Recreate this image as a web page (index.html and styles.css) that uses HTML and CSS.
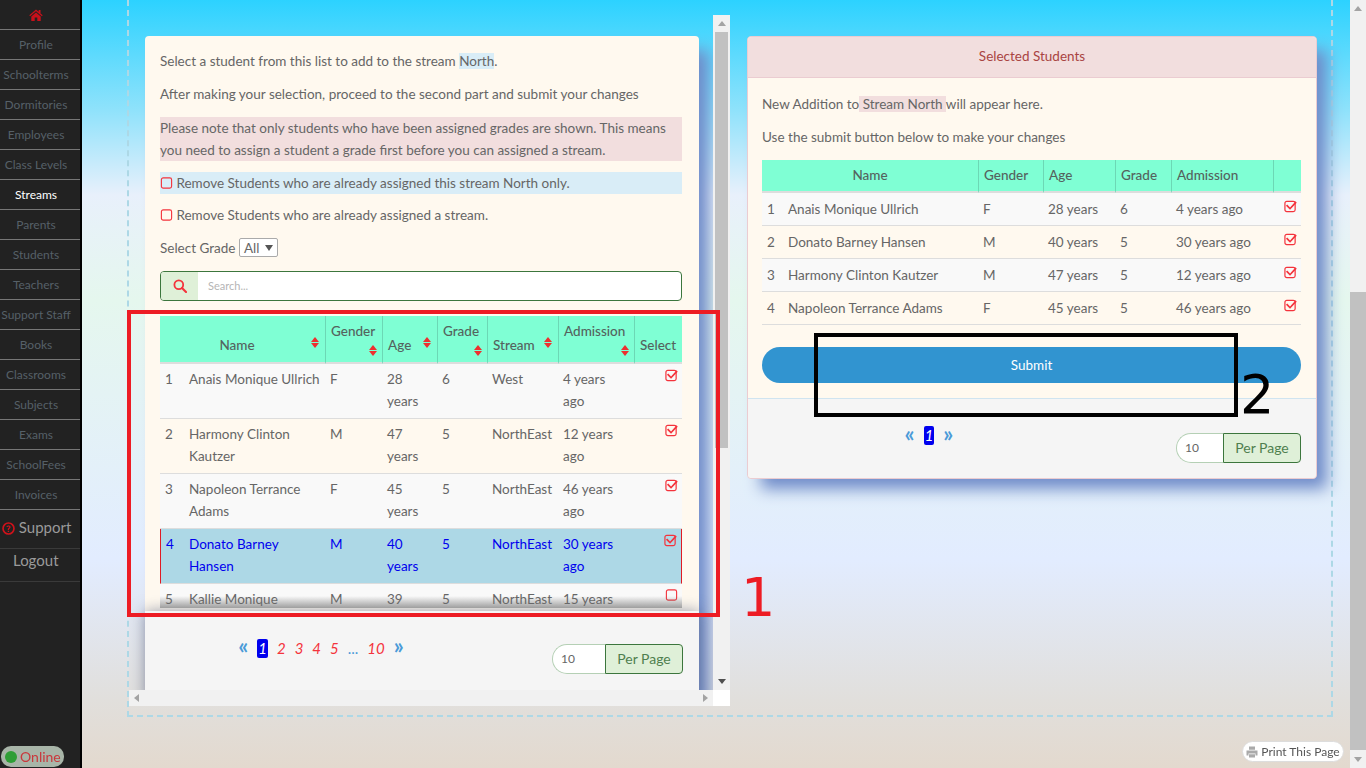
FILE: index.html
```html
<!DOCTYPE html>
<html lang="en">
<head>
    <meta charset="UTF-8">
    <meta name="viewport" content="width=device-width, initial-scale=1.0">
    <title>Streams</title>
    <link rel="stylesheet" href="styles.css">
</head>
<body>

    <svg class="icon-defs" aria-hidden="true">
        <symbol id="ico-checked" viewBox="0 0 14 14">
            <rect x="1" y="2" width="11" height="11" rx="2" fill="none" stroke="#f4333c" stroke-width="1.3"/>
            <path d="M3.5 5.5l3 3 6-6.5 1.2 1.6-7.2 7.4-4.4-4.2z" fill="#f4333c"/>
        </symbol>
        <symbol id="ico-empty" viewBox="0 0 14 14">
            <rect x="1.5" y="1.5" width="11" height="11" rx="2" fill="none" stroke="#f4333c" stroke-width="1.2"/>
        </symbol>
    </svg>

    <nav class="sidebar">
        <a class="nav-item nav-home">
            <svg width="14" height="12" viewBox="0 0 14 12"><path d="M7 0.5L0.3 6.3l.8.9L7 2.2l5.9 5 .8-.9-2.2-1.9V1h-1.8v1.8zM2.3 7.6V12h3.4V8.5h2.6V12h3.4V7.6L7 3.6z" fill="#c8101a"/></svg>
        </a>
        <a class="nav-item">Profile</a>
        <a class="nav-item">Schoolterms</a>
        <a class="nav-item">Dormitories</a>
        <a class="nav-item">Employees</a>
        <a class="nav-item">Class Levels</a>
        <a class="nav-item active">Streams</a>
        <a class="nav-item">Parents</a>
        <a class="nav-item">Students</a>
        <a class="nav-item">Teachers</a>
        <a class="nav-item">Support Staff</a>
        <a class="nav-item">Books</a>
        <a class="nav-item">Classrooms</a>
        <a class="nav-item">Subjects</a>
        <a class="nav-item">Exams</a>
        <a class="nav-item">SchoolFees</a>
        <a class="nav-item">Invoices</a>
        <a class="nav-big nav-support">
            <svg width="13" height="13" viewBox="0 0 14 14"><circle cx="7" cy="7" r="5.9" fill="none" stroke="#d0121b" stroke-width="1.8"/><path d="M4.8 5.4C5 3.2 9.3 3.2 9.3 5.5c0 1.6-1.8 1.5-1.8 3H6.2c0-2.2 1.7-2 1.7-3 0-.9-1.6-.9-1.8 0zM6.2 9.3h1.4v1.4H6.2z" fill="#d0121b"/></svg>
            Support
        </a>
        <a class="nav-big nav-logout">Logout</a>
    </nav>

    <main class="content">
        <div class="frame">

            <section class="scroller">
                <div class="scroll-view">
                    <div class="card card-pick">
                        <div class="card-body">
                            <p>Select a student from this list to add to the stream <span class="mark-blue">North</span>.</p>
                            <p>After making your selection, proceed to the second part and submit your changes</p>
                            <p class="note-red">Please note that only students who have been assigned grades are shown. This means you need to assign a student a grade first before you can assigned a stream.</p>
                            <p class="note-blue"><svg class="box"><use href="#ico-empty"/></svg> Remove Students who are already assigned this stream North only.</p>
                            <p><svg class="box"><use href="#ico-empty"/></svg> Remove Students who are already assigned a stream.</p>
                            <p>Select Grade <span class="fake-select">All <i class="caret"></i></span></p>

                            <div class="search">
                                <span class="search-addon">
                                    <svg width="14" height="14" viewBox="0 0 14 14"><circle cx="5.8" cy="5.8" r="4.4" fill="none" stroke="#f4333c" stroke-width="1.8"/><path d="M9 9l4 4" stroke="#f4333c" stroke-width="2.2" stroke-linecap="round"/></svg>
                                </span>
                                <span class="search-input">Search...</span>
                            </div>

                            <div class="table-clip">
                                <table class="grid grid-pick">
                                    <colgroup>
                                        <col class="w-24"><col class="w-141"><col class="w-57"><col class="w-55"><col class="w-50"><col class="w-71"><col class="w-76"><col class="w-48">
                                    </colgroup>
                                    <thead>
                                        <tr>
                                            <th class="center" colspan="2"><i class="sort"></i>Name</th>
                                            <th class="stack">Gender<i class="sort"></i></th>
                                            <th><i class="sort"></i>Age</th>
                                            <th class="stack">Grade<i class="sort"></i></th>
                                            <th><i class="sort"></i>Stream</th>
                                            <th class="stack">Admission<i class="sort"></i></th>
                                            <th>Select</th>
                                        </tr>
                                    </thead>
                                    <tbody>
                                        <tr>
                                            <td>1</td><td>Anais Monique Ullrich</td><td>F</td><td>28 years</td><td>6</td><td>West</td><td>4 years ago</td>
                                            <td class="tick"><svg class="box"><use href="#ico-checked"/></svg></td>
                                        </tr>
                                        <tr>
                                            <td>2</td><td>Harmony Clinton Kautzer</td><td>M</td><td>47 years</td><td>5</td><td>NorthEast</td><td>12 years ago</td>
                                            <td class="tick"><svg class="box"><use href="#ico-checked"/></svg></td>
                                        </tr>
                                        <tr>
                                            <td>3</td><td>Napoleon Terrance Adams</td><td>F</td><td>45 years</td><td>5</td><td>NorthEast</td><td>46 years ago</td>
                                            <td class="tick"><svg class="box"><use href="#ico-checked"/></svg></td>
                                        </tr>
                                        <tr class="picked">
                                            <td>4</td><td>Donato Barney Hansen</td><td>M</td><td>40 years</td><td>5</td><td>NorthEast</td><td>30 years ago</td>
                                            <td class="tick"><svg class="box"><use href="#ico-checked"/></svg></td>
                                        </tr>
                                        <tr>
                                            <td>5</td><td>Kallie Monique Stokes</td><td>M</td><td>39 years</td><td>5</td><td>NorthEast</td><td>15 years ago</td>
                                            <td class="tick"><svg class="box"><use href="#ico-empty"/></svg></td>
                                        </tr>
                                    </tbody>
                                </table>
                            </div>
                        </div>

                        <div class="card-foot foot-pick">
                            <div class="pager">
                                <span class="chev">«</span>
                                <span class="page current">1</span>
                                <span class="page">2</span>
                                <span class="page">3</span>
                                <span class="page">4</span>
                                <span class="page">5</span>
                                <span class="dots">...</span>
                                <span class="page">10</span>
                                <span class="chev">»</span>
                            </div>
                            <div class="per-page">
                                <span class="per-input">10</span>
                                <span class="per-label">Per Page</span>
                            </div>
                        </div>
                    </div>
                </div>

                <div class="vbar">
                    <i class="arrow arrow-up"></i>
                    <div class="vbar-thumb"></div>
                    <i class="arrow arrow-down"></i>
                </div>
                <div class="hbar">
                    <i class="arrow arrow-left"></i>
                    <i class="arrow arrow-right"></i>
                </div>
                <div class="corner"></div>
            </section>

            <section class="card card-selected">
                <div class="card-head">Selected Students</div>
                <div class="card-body">
                    <p>New Addition to<span class="mark-red"> Stream North </span>will appear here.</p>
                    <p>Use the submit button below to make your changes</p>

                    <table class="grid grid-selected">
                        <colgroup>
                            <col class="w-21"><col class="w-195"><col class="w-65"><col class="w-72"><col class="w-56"><col class="w-102"><col class="w-28">
                        </colgroup>
                        <thead>
                            <tr>
                                <th class="center" colspan="2">Name</th>
                                <th>Gender</th>
                                <th>Age</th>
                                <th>Grade</th>
                                <th>Admission</th>
                                <th></th>
                            </tr>
                        </thead>
                        <tbody>
                            <tr>
                                <td>1</td><td>Anais Monique Ullrich</td><td>F</td><td>28 years</td><td>6</td><td>4 years ago</td>
                                <td class="tick"><svg class="box"><use href="#ico-checked"/></svg></td>
                            </tr>
                            <tr>
                                <td>2</td><td>Donato Barney Hansen</td><td>M</td><td>40 years</td><td>5</td><td>30 years ago</td>
                                <td class="tick"><svg class="box"><use href="#ico-checked"/></svg></td>
                            </tr>
                            <tr>
                                <td>3</td><td>Harmony Clinton Kautzer</td><td>M</td><td>47 years</td><td>5</td><td>12 years ago</td>
                                <td class="tick"><svg class="box"><use href="#ico-checked"/></svg></td>
                            </tr>
                            <tr>
                                <td>4</td><td>Napoleon Terrance Adams</td><td>F</td><td>45 years</td><td>5</td><td>46 years ago</td>
                                <td class="tick"><svg class="box"><use href="#ico-checked"/></svg></td>
                            </tr>
                        </tbody>
                    </table>

                    <button class="submit" type="button">Submit</button>
                </div>
                <div class="card-foot foot-selected">
                    <div class="pager">
                        <span class="chev">«</span>
                        <span class="page current">1</span>
                        <span class="chev">»</span>
                    </div>
                    <div class="per-page">
                        <span class="per-input">10</span>
                        <span class="per-label">Per Page</span>
                    </div>
                </div>
            </section>

        </div>
    </main>

    <div class="pagebar">
        <i class="arrow arrow-up"></i>
        <div class="pagebar-thumb"></div>
        <i class="arrow arrow-down"></i>
    </div>

    <!-- things lying on top of the page -->
    <div class="online"><i class="dot"></i>Online</div>
    <div class="print">
        <svg width="12" height="12" viewBox="0 0 12 12"><path d="M3 0.5h6v3.2H3zM0.5 4.5h11v5H9.5V7.5h-7v2H0.5zM3 8.3h6v3.2H3z" fill="#aaa"/></svg>
        Print This Page
    </div>
    <div class="callout callout-red"></div>
    <div class="callout-num num-red">1</div>
    <div class="callout callout-black"></div>
    <div class="callout-num num-black">2</div>

</body>
</html>
```

FILE: styles.css
```css
* {
    box-sizing: border-box;
}

html, body {
    height: 768px;
    overflow: hidden;
}

body {
    margin: 0;
    display: flex;
    font-family: Lato, "Open Sans", sans-serif;
    font-size: 13.5px;
    line-height: 22px;
    color: #666;
    background: linear-gradient(to bottom, #2cd2ff 0, #8fe2fb 110px, #e8f0fb 195px, #e5f7ee 300px, #e2ecff 560px, #e1dfdc 700px, #e3d9ce 768px);
}

.icon-defs {
    position: absolute;
    width: 0;
    height: 0;
}

/* sidebar */
.sidebar {
    flex: 0 0 82px;
    height: 768px;
    background-color: #222;
    border-right: 2px solid #000;
}

.nav-item {
    display: flex;
    align-items: center;
    justify-content: center;
    height: 30px;
    padding-right: 8px;
    border-bottom: 1px solid #777;
    font-size: 12px;
    color: #566068;
    white-space: nowrap;
}

.nav-item.active {
    color: #fff;
}

.nav-big {
    display: block;
    font-size: 15px;
    color: #9a9a9a;
    border-bottom: 1px solid #3a3a3a;
    white-space: nowrap;
}

.nav-support {
    height: 39px;
    padding: 6px 0 0 2px;
}

.nav-support svg {
    vertical-align: -2px;
}

.nav-logout {
    height: 33px;
    padding: 0 0 0 13px;
}

/* main area */
.content {
    flex: 1;
    padding-left: 45px;
}

.frame {
    display: flex;
    align-items: flex-start;
    gap: 17px;
    width: 1206px;
    height: 717px;
    padding-top: 15px;
    border: 2px dashed #add8e6;
    border-top: none;
}

.scroller {
    display: grid;
    grid-template-columns: 584px 17px;
    grid-template-rows: 675px 16px;
    flex: 0 0 601px;
}

.scroll-view {
    overflow: hidden;
    padding: 21px 0 0 16px;
}

.card {
    background-color: #fff9ef;
    border-radius: 4px;
    box-shadow: 12px 12px 16px -2px #6f8bc9;
}

.card-pick {
    width: 554px;
    height: 700px;
}

.card-selected {
    flex: 0 0 570px;
    margin-top: 21px;
    border: 1px solid #ebccd1;
}

.card-head {
    height: 41px;
    line-height: 38px;
    text-align: center;
    color: #a94442;
    background-color: #f2dede;
    border-bottom: 1px solid #ebccd1;
    border-radius: 4px 4px 0 0;
}

.card-body {
    padding: 14px 17px 0 15px;
}

.card-selected .card-body {
    padding: 15px 15px 15px 14px;
}

.card-body p {
    margin: 0 0 11px;
}

.mark-blue {
    background-color: #d9edf7;
}

.mark-red {
    background-color: #f2dede;
}

.card-body .note-red {
    margin-top: 12px;
    background-color: #f2dede;
}

.card-body .note-blue {
    margin-bottom: 10px;
    background-color: #d9edf7;
}

.box {
    width: 13px;
    height: 14px;
    vertical-align: -2px;
}

.fake-select {
    display: inline-block;
    height: 19px;
    padding: 0 4px;
    line-height: 18px;
    border: 1px solid #aaa;
    border-radius: 2px;
    background-color: #fff;
}

.caret {
    display: inline-block;
    margin-left: 2px;
    vertical-align: 2px;
    border-left: 4px solid transparent;
    border-right: 4px solid transparent;
    border-top: 6px solid #555;
}

.search {
    display: flex;
    height: 30px;
    margin: 12px 0 15px;
    border: 1px solid #3c763d;
    border-radius: 4px;
    background-color: #fff;
    overflow: hidden;
}

.search-addon {
    display: flex;
    align-items: center;
    justify-content: center;
    width: 37px;
    background-color: #dff0d8;
}

.search-input {
    padding-left: 10px;
    font-size: 11px;
    line-height: 28px;
    color: #b5b5b5;
}

/* tables */
.grid {
    width: 100%;
    table-layout: fixed;
    border-collapse: separate;
    border-spacing: 0;
}

.w-21 { width: 21px; }
.w-24 { width: 24px; }
.w-28 { width: 28px; }
.w-48 { width: 48px; }
.w-50 { width: 50px; }
.w-55 { width: 55px; }
.w-56 { width: 56px; }
.w-57 { width: 57px; }
.w-65 { width: 65px; }
.w-71 { width: 71px; }
.w-72 { width: 72px; }
.w-76 { width: 76px; }
.w-102 { width: 102px; }
.w-141 { width: 141px; }
.w-195 { width: 195px; }

.grid th {
    padding: 4px 5px;
    font-weight: 500;
    color: #54635e;
    text-align: left;
    background-color: #7fffd4;
    border-left: 1px solid #6cd8b5;
    border-bottom: 2px solid #ddd;
}

.grid th:first-child {
    border-left: none;
}

.grid th.center {
    text-align: center;
}

.grid td {
    padding: 4px 5px 6px;
    vertical-align: top;
    border-bottom: 1px solid #ddd;
}

.grid tbody tr:nth-child(odd) {
    background-color: #f9f9f9;
}

.grid td.tick {
    padding: 0 4px 0 0;
    text-align: right;
}

.grid-pick th {
    height: 47px;
    padding-bottom: 6px;
    vertical-align: bottom;
}

.grid-pick th.stack {
    padding-top: 4px;
    vertical-align: top;
}

.sort {
    position: relative;
    float: right;
    width: 9px;
    height: 11px;
    margin: 3px 0 0 2px;
}

.sort::before,
.sort::after {
    content: "";
    position: absolute;
    left: 0;
    border-left: 4.5px solid transparent;
    border-right: 4.5px solid transparent;
}

.sort::before {
    top: 0;
    border-bottom: 5px solid #ee2f2f;
}

.sort::after {
    bottom: 0;
    border-top: 5px solid #ee2f2f;
}

.stack .sort {
    margin-right: -1px;
}

.grid tbody .picked {
    background-color: #add8e6;
    color: #0000ee;
}

.picked td:first-child {
    border-left: 1px solid #e01b24;
}

.picked td:last-child {
    border-right: 1px solid #e01b24;
}

.table-clip {
    position: relative;
    height: 292px;
    overflow: hidden;
}

.table-clip::after {
    content: "";
    position: absolute;
    left: 0;
    right: 0;
    bottom: 0;
    height: 12px;
    background: linear-gradient(to bottom, rgba(120, 120, 120, 0), rgba(110, 110, 110, 0.65));
}

.grid-selected {
    margin-top: 12px;
}

.grid-selected th {
    height: 33px;
    padding: 0 5px 2px;
}

.grid-selected td {
    height: 33px;
    padding: 5px;
}

.grid-selected td.tick {
    padding-top: 2px;
}

.submit {
    display: block;
    width: 100%;
    height: 36px;
    margin-top: 22px;
    padding-bottom: 2px;
    border: none;
    border-radius: 18px;
    font: inherit;
    color: #fff;
    background-color: #3194d0;
}

/* panel footers */
.card-foot {
    display: flex;
    align-items: flex-start;
    padding: 0 15px;
    background-color: #f5f5f5;
}

.foot-pick {
    height: 91px;
    margin-top: 3px;
    box-shadow: 0 0 14px rgba(80, 90, 120, 0.6);
}

.foot-selected {
    height: 80px;
    border-top: 1px solid #d0e4f0;
    border-radius: 0 0 4px 4px;
}

.pager {
    display: flex;
    align-items: center;
    justify-content: center;
    gap: 9px;
    width: 322px;
    margin-top: 26px;
    font-size: 15px;
    font-style: italic;
    color: #f4333c;
}

.foot-selected .pager {
    width: 332px;
    margin-top: 27px;
}

.chev {
    font-size: 22px;
    font-style: normal;
    font-weight: 700;
    line-height: 18px;
    color: #4a9ad8;
    margin-top: -4px;
}

.current {
    padding: 0 1px;
    line-height: 19px;
    color: #fff;
    background-color: #0000ee;
    border-radius: 2px;
}

.dots {
    color: #4a9ad8;
    font-style: normal;
}

.per-page {
    display: flex;
    margin-left: auto;
    width: 125px;
    height: 30px;
    margin-top: 34px;
    font-size: 14px;
    line-height: 28px;
}

.foot-pick .per-page {
    width: 131px;
    margin-top: 33px;
    margin-right: 1px;
}

.per-input {
    flex: 1;
    padding-left: 8px;
    font-size: 12px;
    background-color: #fff;
    border: 1px solid #b5d0b5;
    border-right: none;
    border-radius: 15px 0 0 15px;
}

.per-label {
    width: 78px;
    text-align: center;
    color: #4f7f4f;
    background-color: #dff0d8;
    border: 1px solid #3c763d;
    border-radius: 0 4px 4px 0;
}

/* scrollbars, drawn by hand */
.vbar {
    display: flex;
    flex-direction: column;
    align-items: center;
    background-color: #f1f1f1;
    padding-top: 17px;
    position: relative;
}

.vbar-thumb {
    width: 13px;
    height: 416px;
    background-color: #c1c1c1;
}

.vbar .arrow-up {
    position: absolute;
    top: 6px;
}

.vbar .arrow-down {
    position: absolute;
    bottom: 6px;
}

.hbar {
    display: flex;
    align-items: center;
    justify-content: space-between;
    padding: 0 5px;
    background-color: #f1f1f1;
}

.corner {
    background-color: #fff;
}

.arrow {
    display: block;
    width: 0;
    height: 0;
}

.arrow-up {
    border-left: 4px solid transparent;
    border-right: 4px solid transparent;
    border-bottom: 5px solid #a3a3a3;
}

.arrow-down {
    border-left: 4px solid transparent;
    border-right: 4px solid transparent;
    border-top: 5px solid #505050;
}

.arrow-left {
    border-top: 4px solid transparent;
    border-bottom: 4px solid transparent;
    border-right: 5px solid #a3a3a3;
}

.arrow-right {
    border-top: 4px solid transparent;
    border-bottom: 4px solid transparent;
    border-left: 5px solid #a3a3a3;
}

.pagebar {
    flex: 0 0 16px;
    height: 768px;
    position: relative;
    background-color: #f1f1f1;
    padding-top: 292px;
}

.pagebar-thumb {
    height: 458px;
    background-color: #c1c1c1;
}

.pagebar .arrow-up {
    position: absolute;
    top: 6px;
    left: 4px;
}

.pagebar .arrow-down {
    position: absolute;
    bottom: 6px;
    left: 4px;
    border-top-color: #a3a3a3;
}

/* overlays */
.online {
    position: fixed;
    left: 1px;
    top: 746px;
    width: 63px;
    height: 21px;
    padding-left: 4px;
    display: flex;
    align-items: center;
    gap: 3px;
    font-size: 14px;
    color: #c9383c;
    background-color: #a8b5a8;
    border-radius: 10px;
}

.dot {
    width: 12px;
    height: 12px;
    border-radius: 50%;
    background-color: #2f9e36;
}

.print {
    position: fixed;
    left: 1242px;
    top: 741px;
    width: 102px;
    height: 21px;
    display: flex;
    align-items: center;
    justify-content: center;
    gap: 3px;
    font-size: 12px;
    color: #555;
    background-color: #fff;
    border: 1px solid #ddd;
    border-radius: 11px;
}

.callout {
    position: fixed;
    border-style: solid;
    border-width: 4px;
}

.callout-red {
    left: 127px;
    top: 310px;
    width: 593px;
    height: 307px;
    border-color: #ed1c24;
}

.callout-black {
    left: 814px;
    top: 333px;
    width: 424px;
    height: 84px;
    border-color: #000;
}

.callout-num {
    position: fixed;
    font-family: "DejaVu Sans", sans-serif;
    font-size: 54px;
    line-height: 54px;
}

.num-red {
    left: 741px;
    top: 571px;
    color: #ed1c24;
}

.num-black {
    left: 1240px;
    top: 368px;
    color: #000;
}
```
